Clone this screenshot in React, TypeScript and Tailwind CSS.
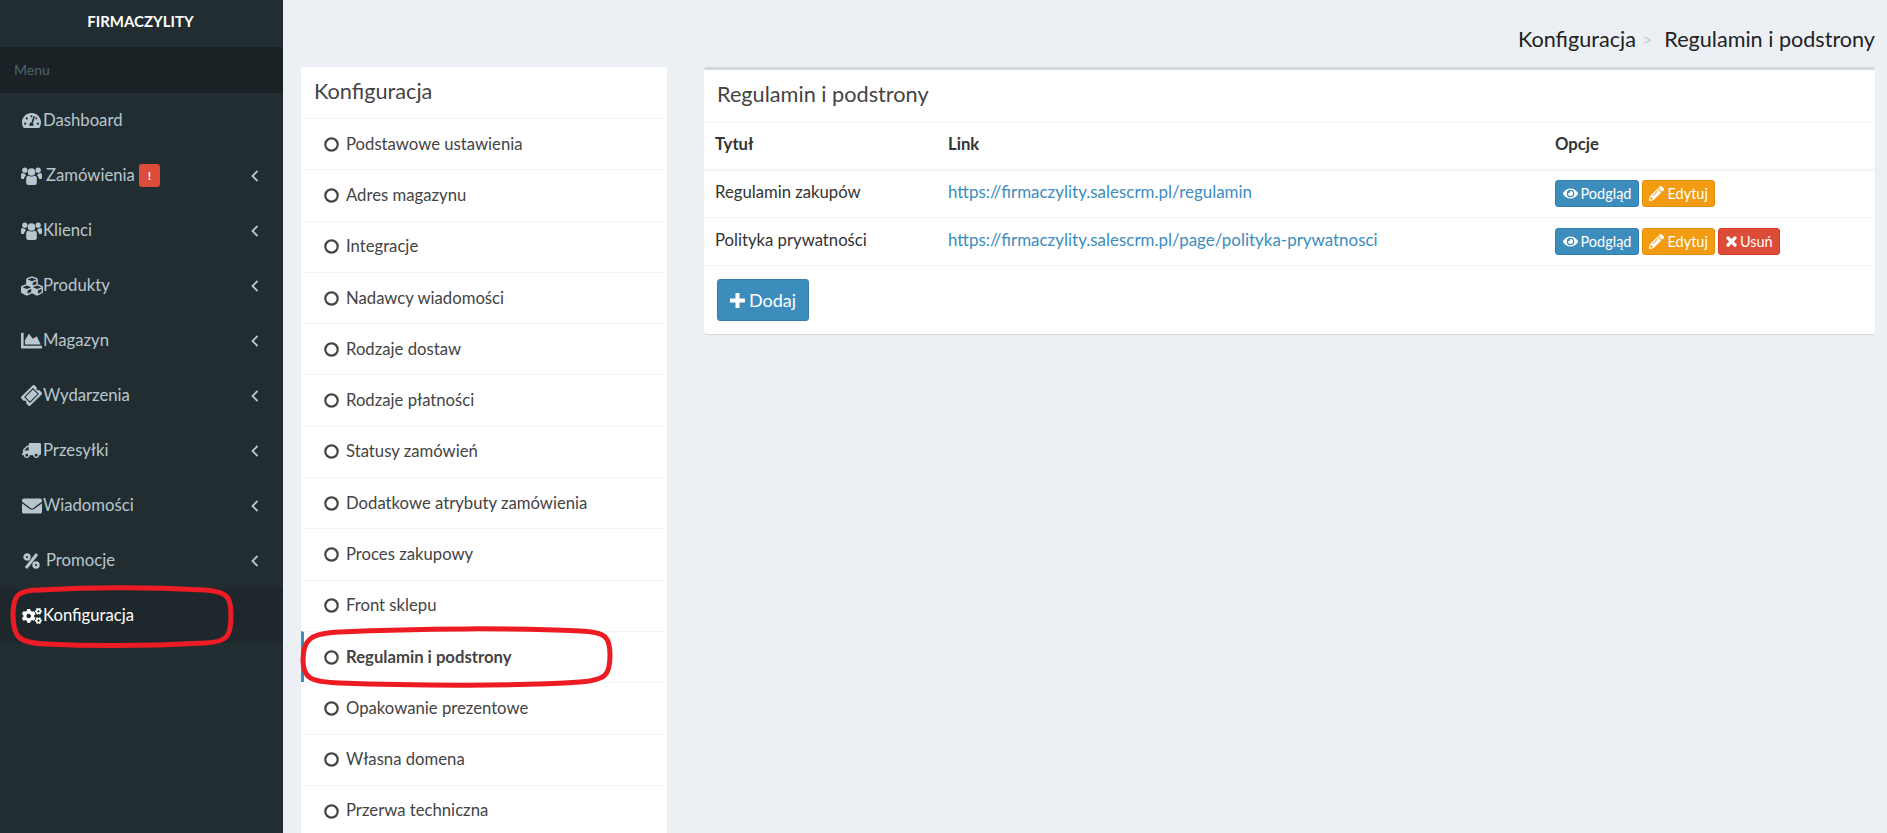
import { FaChartArea, FaCogs, FaCubes, FaEnvelope, FaEye, FaPencilAlt, FaTachometerAlt, FaTicketAlt, FaTruck } from 'react-icons/fa';
import type { ReactNode } from 'react';

function UsersIcon() {
  return (
    <svg width="21" height="20" viewBox="0 0 21 20" fill="currentColor">
      <circle cx="10.5" cy="6" r="3.8" />
      <circle cx="3.8" cy="4.2" r="2.6" />
      <circle cx="17.2" cy="4.2" r="2.6" />
      <path d="M5.2 12.5c0-2 1.6-3 3-2.6.7.4 1.4.6 2.3.6s1.600-.2 2.300-.6c1.400-.4 3 .6 3 2.600V17c0 1.300-1 2-2.200 2H7.400c-1.200 0-2.200-.7-2.200-2z" />
      <path d="M0 9c0-1.300.9-2.100 1.800-1.900.7.400 1.400.6 2.200.5.100.9.500 1.600 1.100 2.200-1.300.6-2.100 1.800-2.100 3.200H1.500C.6 13 0 12.500 0 11.700z" />
      <path d="M21 9c0-1.300-.9-2.100-1.800-1.900-.7.400-1.400.6-2.200.5-.100.9-.500 1.600-1.100 2.200 1.300.6 2.100 1.800 2.100 3.200h1.500c.9 0 1.500-.5 1.500-1.300z" />
    </svg>
  )
}

function PercentIcon() {
  return (
    <svg width="17" height="16" viewBox="0 0 17 16" fill="none" stroke="currentColor" strokeWidth="2.600">
      <circle cx="4" cy="4" r="2.400" />
      <circle cx="13" cy="12" r="2.400" />
      <path d="M14 1 3 15" strokeWidth="3" />
    </svg>
  )
}

function ArrowLeft() {
  return (
    <svg className="ml-auto" width="8" height="12" viewBox="0 0 8 12" fill="none" stroke="currentColor" strokeWidth="1.800">
      <path d="M6.500 1 1.500 6l5 5" />
    </svg>
  )
}

function RingIcon() {
  return (
    <svg className="shrink-0" width="15" height="15" viewBox="0 0 15 15" fill="none" stroke="currentColor" strokeWidth="2.200">
      <circle cx="7.500" cy="7.500" r="6.200" />
    </svg>
  )
}

function CrossIcon() {
  return (
    <svg width="11" height="11" viewBox="0 0 11 11" fill="none" stroke="currentColor" strokeWidth="3.200" strokeLinecap="round">
      <path d="M2 2l7 7M9 2l-7 7" />
    </svg>
  )
}

function PlusIcon() {
  return (
    <svg width="15" height="15" viewBox="0 0 15 15" fill="none" stroke="currentColor" strokeWidth="4">
      <path d="M7.500 0v15M0 7.500h15" />
    </svg>
  )
}

const menu = [
  { label: 'Dashboard', icon: <FaTachometerAlt />, arrow: false },
  { label: 'Zamówienia', icon: <UsersIcon />, arrow: true, badge: true, gap: true },
  { label: 'Klienci', icon: <UsersIcon />, arrow: true },
  { label: 'Produkty', icon: <FaCubes className="text-[22px]" />, arrow: true },
  { label: 'Magazyn', icon: <FaChartArea className="text-[21px]" />, arrow: true },
  { label: 'Wydarzenia', icon: <FaTicketAlt className="-rotate-45" />, arrow: true },
  { label: 'Przesyłki', icon: <FaTruck className="-scale-x-100" />, arrow: true },
  { label: 'Wiadomości', icon: <FaEnvelope className="text-[20px]" />, arrow: true },
  { label: 'Promocje', icon: <PercentIcon />, arrow: true, gap: true },
]

const settings = [
  'Podstawowe ustawienia',
  'Adres magazynu',
  'Integracje',
  'Nadawcy wiadomości',
  'Rodzaje dostaw',
  'Rodzaje płatności',
  'Statusy zamówień',
  'Dodatkowe atrybuty zamówienia',
  'Proces zakupowy',
  'Front sklepu',
  'Regulamin i podstrony',
  'Opakowanie prezentowe',
  'Własna domena',
  'Przerwa techniczna',
]

function SmallButton({ color, icon, children }: { color: string; icon: ReactNode; children: ReactNode }) {
  return (
    <button className={`flex h-[27px] items-center gap-[3px] rounded-[3px] border px-[6.500px] text-[14.500px] text-white ${color}`}>
      <span className="text-[15px]">{icon}</span>
      {children}
    </button>
  )
}

function Options({ remove }: { remove?: boolean }) {
  return (
    <div className="flex gap-[3px]">
      <SmallButton color="border-[#367fa9] bg-[#3c8dbc]" icon={<FaEye />}>Podgląd</SmallButton>
      <SmallButton color="border-[#e08e0b] bg-[#f39c12]" icon={<FaPencilAlt />}>Edytuj</SmallButton>
      {remove && <SmallButton color="border-[#d73925] bg-[#dd4b39]" icon={<CrossIcon />}>Usuń</SmallButton>}
    </div>
  )
}

export default function App() {
  return (
    <div className="flex h-[833px] overflow-hidden bg-[#ecf0f5] font-['Lato','Noto_Sans',sans-serif] text-[16.700px] text-[#333]">
      <aside className="w-[283px] shrink-0 bg-[#222d32]">
        <div className="flex h-[47px] items-center justify-center pb-[4px] pr-[2px] text-[15px] font-bold text-white">FIRMACZYLITY</div>
        <div className="flex h-[46px] items-center bg-[#1a2226] pb-[2px] pl-[14px] text-[14px] text-[#4b646f]">Menu</div>
        <nav className="text-[16.700px]">
          {menu.map((m) => (
            <div key={m.label} className="flex h-[55px] items-center pl-[20px] pr-[24px] text-[#b8c7ce]">
              <span className="flex w-[23px] shrink-0 justify-center text-[19px]">{m.icon}</span>
              <span className={m.gap ? 'ml-[3px]' : ''}>{m.label}</span>
              {m.badge && <span className="ml-[4px] flex h-[23px] w-[21px] items-center justify-center rounded-[3px] bg-[#dd4b39] text-[12px] font-bold text-white">!</span>}
              {m.arrow && <ArrowLeft />}
            </div>
          ))}
          <div className="flex h-[55px] items-center bg-[#1e282c] pl-[20px] text-white">
            <span className="flex w-[23px] shrink-0 justify-center text-[20px]"><FaCogs /></span>
            <span>Konfiguracja</span>
          </div>
        </nav>
      </aside>

      <main className="relative min-w-0 flex-1 pl-[18px] pr-[12px]">
        <div className="flex h-[67px] items-start justify-end pt-[25px] text-[21.600px] leading-[28px] text-[#222]">
          <span>Konfiguracja</span>
          <span className="mx-[6px] text-[18px] text-[#ccc]">&gt;</span>
          <span className="ml-[6px]">Regulamin i podstrony</span>
        </div>
        <div className="flex items-start gap-[37px]">
          <section className="w-[366px] shrink-0 rounded-[3px] bg-white">
            <h2 className="flex h-[51px] items-center pb-[3px] pl-[13px] text-[21.700px] text-[#444]">Konfiguracja</h2>
            {settings.map((s) => {
              const active = s === 'Regulamin i podstrony'
              return (
                <div key={s} className={`flex h-[51.300px] items-center gap-[7px] border-t border-[#f4f4f4] pl-[23px] text-[#444] ${active ? 'border-l-[3px] !pl-[20px] border-l-[#3c8dbc] font-bold' : ''}`}>
                  <RingIcon />
                  {s}
                </div>
              )
            })}
          </section>

          <section className="min-w-0 flex-1 rounded-[3px] border-t-[3px] border-[#d2d6de] bg-white shadow-[0_1px_1px_rgba(0,0,0,0.1)]">
            <h2 className="flex h-[52px] items-center pb-[4px] pl-[13px] text-[21.700px] text-[#444]">Regulamin i podstrony</h2>
            <table className="w-full border-collapse">
              <thead>
                <tr className="h-[47px] border-t border-b-[2px] border-[#f4f4f4] text-left">
                  <th className="w-[244px] pb-[2px] pl-[11px] font-bold">Tytuł</th>
                  <th className="w-[607px] pb-[2px] font-bold">Link</th>
                  <th className="pb-[2px] font-bold">Opcje</th>
                </tr>
              </thead>
              <tbody>
                <tr className="h-[48px] border-b border-[#f4f4f4]">
                  <td className="pb-[3px] pl-[11px]">Regulamin zakupów</td>
                  <td className="pb-[4px] text-[16.950px] text-[#3c8dbc]">https://firmaczylity.salescrm.pl/regulamin</td>
                  <td><Options /></td>
                </tr>
                <tr className="h-[48px] border-b border-[#f4f4f4]">
                  <td className="pb-[2px] pl-[11px]">Polityka prywatności</td>
                  <td className="pb-[3px] text-[16.950px] text-[#3c8dbc]">https://firmaczylity.salescrm.pl/page/polityka-prywatnosci</td>
                  <td><Options remove /></td>
                </tr>
              </tbody>
            </table>
            <div className="px-[13px] py-[13px]">
              <button className="flex h-[42px] w-[92px] items-center justify-center gap-[4px] rounded-[3px] border border-[#367fa9] bg-[#3c8dbc] text-[18px] text-white">
                <PlusIcon />Dodaj
              </button>
            </div>
          </section>
        </div>
      </main>

      <svg className="pointer-events-none absolute left-0 top-0" width="1887" height="833" fill="none" stroke="#ed1c24" strokeWidth="5">
        <path d="M40 590 C18 590 13 595 13 615 C13 638 20 643 45 644 C90 646 150 646 205 643 C228 642 231 636 231 615 C231 597 228 592 205 590 C150 587 90 587 40 590 Z" />
        <path d="M340 632 C310 633 303 640 303 660 C303 678 310 682 340 683 C420 686 520 686 580 682 C606 680 610 675 610 655 C610 637 606 632 580 631 C520 628 420 628 340 632 Z" />
      </svg>
    </div>
  );
}
